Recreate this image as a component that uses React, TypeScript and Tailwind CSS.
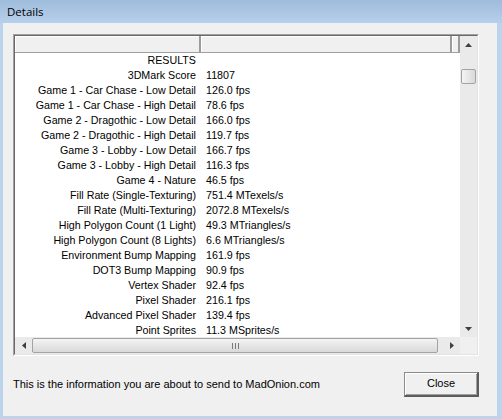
import { useState } from "react";

type Row = { label: string; value: string };

const rows: Row[] = [
  { label: "RESULTS", value: "" },
  { label: "3DMark Score", value: "11807" },
  { label: "Game 1 - Car Chase - Low Detail", value: "126.0 fps" },
  { label: "Game 1 - Car Chase - High Detail", value: "78.6 fps" },
  { label: "Game 2 - Dragothic - Low Detail", value: "166.0 fps" },
  { label: "Game 2 - Dragothic - High Detail", value: "119.7 fps" },
  { label: "Game 3 - Lobby - Low Detail", value: "166.7 fps" },
  { label: "Game 3 - Lobby - High Detail", value: "116.3 fps" },
  { label: "Game 4 - Nature", value: "46.5 fps" },
  { label: "Fill Rate (Single-Texturing)", value: "751.4 MTexels/s" },
  { label: "Fill Rate (Multi-Texturing)", value: "2072.8 MTexels/s" },
  { label: "High Polygon Count (1 Light)", value: "49.3 MTriangles/s" },
  { label: "High Polygon Count (8 Lights)", value: "6.6 MTriangles/s" },
  { label: "Environment Bump Mapping", value: "161.9 fps" },
  { label: "DOT3 Bump Mapping", value: "90.9 fps" },
  { label: "Vertex Shader", value: "92.4 fps" },
  { label: "Pixel Shader", value: "216.1 fps" },
  { label: "Advanced Pixel Shader", value: "139.4 fps" },
  { label: "Point Sprites", value: "11.3 MSprites/s" },
];

const Arrow = ({ dir }: { dir: "up" | "down" | "left" | "right" }) => {
  const pts = {
    up: "0,4 7,4 3.5,0",
    down: "0,0 7,0 3.5,4",
    left: "4,0 4,7 0,3.5",
    right: "0,0 0,7 4,3.5",
  }[dir];
  const vertical = dir === "up" || dir === "down";
  return (
    <svg width={vertical ? 7 : 4} height={vertical ? 4 : 7} viewBox={vertical ? "0 0 7 4" : "0 0 4 7"}>
      <polygon points={pts} fill="#404040" />
    </svg>
  );
};

function HeaderCell({ width, grow }: { width?: string; grow?: boolean }) {
  return (
    <div
      className={`${width ?? ""} ${grow ? "flex-1" : ""} h-full border-r-2 border-r-[#9b9b9b] border-b border-b-[#a0a0a0] bg-[#f0f0f0] shadow-[inset_1px_1px_0_#ffffff]`}
    />
  );
}

export default function App() {
  const [selected, setSelected] = useState<number | null>(null);

  return (
    <div className="flex h-[419px] w-[502px] flex-col bg-[#bcd3ec] font-['Liberation_Sans',Arial,sans-serif]">
      {/* title bar */}
      <div className="flex h-[23px] items-center bg-gradient-to-b from-[#9fbcdc] to-[#b7cfea] pl-[7px] font-['Open_Sans',sans-serif] text-[11.5px] text-black">
        Details
      </div>

      {/* window body */}
      <div className="mb-[3px] ml-[3px] mr-[5px] flex flex-1 flex-col bg-[#f0f0f0] pl-[10px] pr-[18px] pt-[11px]">
        {/* list view */}
        <div className="h-[322px] w-[466px] border border-b-white border-l-[#a0a0a0] border-r-white border-t-[#a0a0a0]">
          <div className="flex h-full w-full border border-b-[#e3e3e3] border-l-[#696969] border-r-[#e3e3e3] border-t-[#696969]">
            <div className="flex min-w-0 flex-1 flex-col">
              {/* header */}
              <div className="flex h-[17px] shrink-0">
                <HeaderCell width="w-[186px]" />
                <HeaderCell width="w-[251px]" />
                <HeaderCell grow />
              </div>
              {/* rows */}
              <div className="flex-1 overflow-hidden bg-white text-[10.7px] leading-[15px] text-black">
                {rows.map((r, i) => (
                  <div
                    key={r.label}
                    onClick={() => setSelected(i)}
                    className={`flex h-[15px] ${selected === i ? "bg-[#cce8ff]" : ""}`}
                  >
                    <div className="w-[186px] shrink-0 pr-[5px] text-right whitespace-nowrap">{r.label}</div>
                    <div className="pl-[5px] whitespace-nowrap">{r.value}</div>
                  </div>
                ))}
              </div>
              {/* horizontal scrollbar */}
              <div className="flex h-[17px] shrink-0 items-center bg-[#eaeaea]">
                <div className="flex h-full w-[17px] items-center justify-center">
                  <Arrow dir="left" />
                </div>
                <div className="flex h-[15px] w-[406px] items-center justify-center rounded-[2px] border border-[#a3a3a3] bg-gradient-to-b from-[#f4f4f4] to-[#d9d9d9]">
                  <div className="flex gap-[2px]">
                    <div className="h-[6px] w-px bg-[#7a7a7a]" />
                    <div className="h-[6px] w-px bg-[#7a7a7a]" />
                    <div className="h-[6px] w-px bg-[#7a7a7a]" />
                  </div>
                </div>
                <div className="flex-1" />
                <div className="flex h-full w-[17px] items-center justify-center">
                  <Arrow dir="right" />
                </div>
              </div>
            </div>
            {/* vertical scrollbar */}
            <div className="flex w-[17px] shrink-0 flex-col bg-[#eaeaea]">
              <div className="flex h-[17px] items-center justify-center">
                <Arrow dir="up" />
              </div>
              <div className="flex-1 pt-[16px]">
                <div className="mx-auto h-[15px] w-[15px] rounded-[2px] border border-[#a3a3a3] bg-gradient-to-r from-[#f4f4f4] to-[#d9d9d9]" />
              </div>
              <div className="flex h-[17px] items-center justify-center">
                <Arrow dir="down" />
              </div>
              <div className="h-[17px] bg-[#f0f0f0]" />
            </div>
          </div>
        </div>

        {/* footer */}
        <div className="flex flex-1 items-center justify-between pb-[4px]">
          <span className="text-[11px] text-black">This is the information you are about to send to MadOnion.com</span>
          <button className="flex h-[25px] w-[75px] items-center justify-center border-b-2 border-l border-r-2 border-t border-b-[#5c5c5c] border-l-[#8a8a8a] border-r-[#5c5c5c] border-t-[#8a8a8a] bg-[#f0f0f0] text-[11px] text-black shadow-[inset_1px_1px_0_#ffffff,inset_-1px_-1px_0_#a0a0a0]">
            Close
          </button>
        </div>
      </div>
    </div>
  );
}
